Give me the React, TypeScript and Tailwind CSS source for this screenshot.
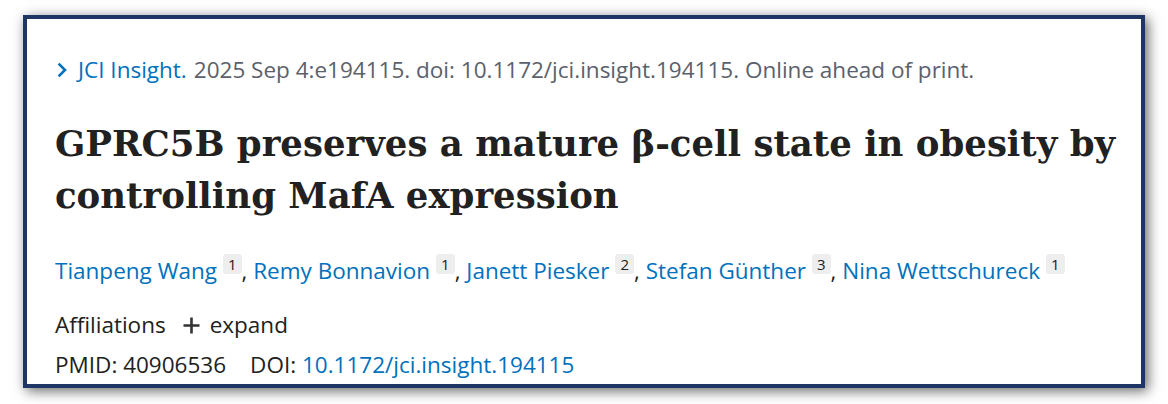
const authors = [
  { name: "Tianpeng Wang", aff: "1" },
  { name: "Remy Bonnavion", aff: "1" },
  { name: "Janett Piesker", aff: "2" },
  { name: "Stefan Günther", aff: "3" },
  { name: "Nina Wettschureck", aff: "1" },
];

export default function App() {
  return (
    <div className="h-[404px] w-[1168px] bg-white pl-[23px] pt-[15px] font-['Open_Sans',sans-serif]">
      <div className="h-[373px] w-[1122px] border-4 border-[#1f3566] bg-white pl-[28px] pt-[36px] shadow-[3px_3px_12px_rgba(0,0,0,0.6)]">
        <p className="flex items-center text-[22.5px] leading-[30px] text-[#5b616b]">
          <svg className="mr-[11px] ml-[2px] h-[16px] w-[10px]" viewBox="0 0 10 16" fill="none">
            <path d="M1.6 1.6 8 8l-6.4 6.4" stroke="#0071bc" strokeWidth="2.6" />
          </svg>
          <span className="text-[#0071bc]">JCI Insight.</span>
          <span className="ml-[7px]">
            2025 Sep 4:e194115. doi: 10.1172/jci.insight.194115. Online ahead of print.
          </span>
        </p>

        <h1 className="mt-[33px] font-['DejaVu_Serif',serif] text-[35.5px] font-bold leading-[52px] text-[#212121]">
          GPRC5B preserves a mature β-cell state in obesity by
          <br />
          controlling MafA expression
        </h1>

        <p className="mt-[32px] text-[22.5px] leading-[32px] text-[#212121]">
          {authors.map((a, i) => (
            <span key={a.name}>
              <span className="text-[#0071bc]">{a.name}</span>
              <span className="ml-[6px] inline-block h-[20px] min-w-[18px] rounded-[3px] bg-[#eeeeee] px-[5px] text-center align-[9px] text-[15px] leading-[20px] text-[#212121]">
                {a.aff}
              </span>
              {i < authors.length - 1 && ", "}
            </span>
          ))}
        </p>

        <div className="mt-[22px] flex items-center text-[22.5px] leading-[32px] text-[#212121]">
          <span>Affiliations</span>
          <span className="ml-[17px] flex items-center gap-[10px] text-[#212121]">
            <svg className="h-[17px] w-[17px]" viewBox="0 0 17 17">
              <path d="M8.5 0.5v16M0.5 8.5h16" stroke="#333" strokeWidth="2.6" />
            </svg>
            expand
          </span>
        </div>

        <p className="mt-[8px] text-[22.5px] leading-[32px] text-[#212121]">
          PMID: 40906536
          <span className="ml-[24px]">DOI: </span>
          <span className="text-[#0071bc]">10.1172/jci.insight.194115</span>
        </p>
      </div>
    </div>
  );
}
